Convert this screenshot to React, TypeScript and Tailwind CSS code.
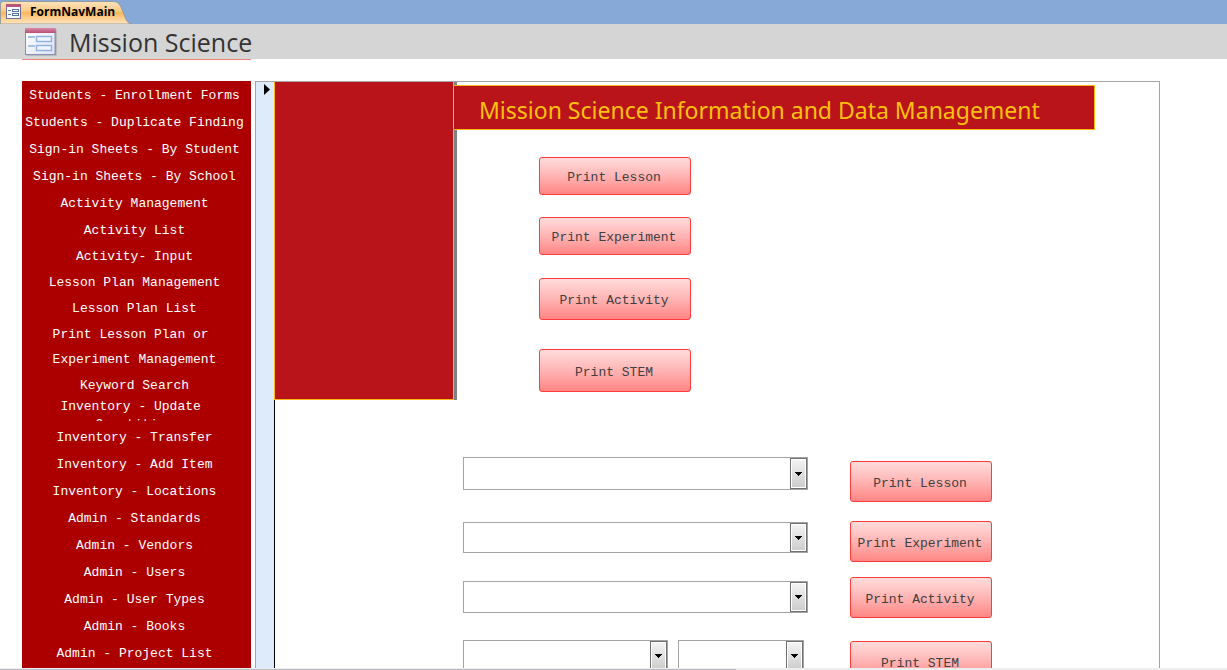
type Item = { label: string; box: string };

const row = "h-[27px] leading-[27px]";

const navItems: Item[] = [
  { label: "Students - Enrollment Forms", box: row },
  { label: "Students - Duplicate Finding", box: row },
  { label: "Sign-in Sheets - By Student", box: row },
  { label: "Sign-in Sheets - By School", box: row },
  { label: "Activity Management", box: row },
  { label: "Activity List", box: row },
  { label: "Activity- Input", box: "h-[26px] leading-[26px]" },
  { label: "Lesson Plan Management", box: "h-[25px] leading-[25px]" },
  { label: "Lesson Plan List", box: row },
  { label: "Print Lesson Plan or \nExperiment Management", box: "h-[51px] leading-[25px]" },
  { label: "Keyword Search", box: "h-[25px] leading-[25px]" },
  { label: "Inventory - Update \nQuantities", box: "mb-[3px] h-[23px] leading-[18px]" },
  { label: "Inventory - Transfer", box: row },
  { label: "Inventory - Add Item", box: row },
  { label: "Inventory - Locations", box: row },
  { label: "Admin - Standards", box: row },
  { label: "Admin - Vendors", box: row },
  { label: "Admin - Users", box: row },
  { label: "Admin - User Types", box: row },
  { label: "Admin - Books", box: row },
  { label: "Admin - Project List", box: row },
];

function FormIcon({ className }: { className: string }) {
  return (
    <svg className={className} viewBox="0 0 32 28" aria-hidden="true">
      <defs>
        <linearGradient id="form-head" x1="0" x2="0" y1="0" y2="1">
          <stop offset="0" stopColor="#d98aa8" />
          <stop offset="1" stopColor="#b84c77" />
        </linearGradient>
        <linearGradient id="form-body" x1="0" x2="1" y1="0" y2="1">
          <stop offset="0" stopColor="#ffffff" />
          <stop offset="1" stopColor="#dde3f3" />
        </linearGradient>
      </defs>
      <rect x="1.5" y="1.5" width="30" height="26" fill="#000" opacity=".25" />
      <rect x=".5" y=".5" width="29.5" height="26" fill="url(#form-body)" stroke="#8a8fb5" />
      <rect x="0" y="0" width="30.5" height="5" fill="url(#form-head)" />
      <path d="M3 9h7M3 18h7" stroke="#a9c0e4" strokeWidth="2" />
      <rect x="11.5" y="8.5" width="15" height="5" fill="#eef4fd" stroke="#93b1de" strokeWidth="1.4" />
      <rect x="11.5" y="17.5" width="15" height="5" fill="#eef4fd" stroke="#93b1de" strokeWidth="1.4" />
    </svg>
  );
}

function SmallFormIcon({ className }: { className: string }) {
  return (
    <svg className={className} viewBox="0 0 16 16" aria-hidden="true">
      <rect x=".5" y=".5" width="14" height="14" fill="#f6f8fd" stroke="#6b6f96" />
      <rect x="0" y="0" width="15" height="3" fill="#b9557c" />
      <path d="M2 6.500h3M2 10.500h3" stroke="#5f7fae" />
      <rect x="6.5" y="5.5" width="6" height="2" fill="#fff" stroke="#55709f" />
      <rect x="6.500" y="9.500" width="6" height="2" fill="#fff" stroke="#55709f" />
    </svg>
  );
}

function PrintButton({ label, className }: { label: string; className: string }) {
  return (
    <button
      type="button"
      className={`shrink-0 whitespace-nowrap rounded-[3px] border border-[#ff3b3b] bg-linear-to-b from-[#ffdcdc] via-[#ffb4b4] to-[#ff8585] pt-1 pr-[2px] text-[#404040] ${className}`}
    >
      {label}
    </button>
  );
}

function Combo({ label, className }: { label: string; className: string }) {
  return (
    <div className={`relative flex shrink-0 border border-[#a5a5a5] bg-white ${className}`}>
      <select aria-label={label} className="min-w-0 flex-1 appearance-none bg-transparent outline-none" />
      <span className="pointer-events-none flex w-[17px] shrink-0 border border-[#707070] bg-white p-px">
        <span className="flex flex-1 items-center justify-center bg-linear-to-b from-[#f3f3f3] via-[#e0e0e0] to-[#cdcdcd]">
          <svg className="h-1 w-[7px]" viewBox="0 0 7 4" shapeRendering="crispEdges" aria-hidden="true">
            <path d="M0 0h7v1H6v1H5v1H4v1H3V3H2V2H1V1H0z" fill="#000" />
          </svg>
        </span>
      </span>
    </div>
  );
}

export default function App() {
  return (
    <div className="flex h-screen flex-col overflow-hidden bg-white font-['Liberation_Mono',monospace] text-[13px]">
      <div className="flex h-6 shrink-0 bg-[#87a9d7]">
        <button type="button" className="relative flex w-[132px] items-center gap-2 pl-[6px]">
          <svg className="absolute inset-0 h-full w-full" viewBox="0 0 132 24" preserveAspectRatio="none" aria-hidden="true">
            <defs>
              <linearGradient id="tab" x1="0" x2="0" y1="0" y2="1">
                <stop offset="0" stopColor="#fde3bd" />
                <stop offset=".4" stopColor="#fbcb88" />
                <stop offset=".5" stopColor="#fab85c" />
                <stop offset="1" stopColor="#fde5c2" />
              </linearGradient>
            </defs>
            <path d="M.5 24V4q0-2.500 3-2.500H113c5 0 7 3 9 8l4 10q1.500 4 6 4.500z" fill="url(#tab)" stroke="#9a9a9a" />
          </svg>
          <SmallFormIcon className="relative h-4 w-4" />
          <span className="relative font-['Open_Sans',sans-serif] text-[12px] font-bold text-black">FormNavMain</span>
        </button>
      </div>
      <header className="flex h-[35px] shrink-0 items-center gap-3 bg-[#d5d5d5] pl-[25px]">
        <FormIcon className="h-7 w-8" />
        <h1 className="pt-[2px] font-['Open_Sans',sans-serif] text-[25px] leading-[33px] text-[#333]">Mission Science</h1>
      </header>

      <div className="flex min-h-0 flex-1 overflow-hidden pl-[22px]">
        <nav className="flex w-[229px] shrink-0 flex-col">
          <div className="mb-[21px] h-px shrink-0 bg-[#f08080]" />
          <div className="flex flex-1 flex-col bg-[#ac0000] pt-px pr-1">
            {navItems.map((item) => (
              <a
                key={item.label}
                href="#"
                className={`block shrink-0 overflow-hidden whitespace-pre text-center text-white ${item.box}`}
              >
                {item.label}
              </a>
            ))}
          </div>
        </nav>

        <main className="mt-[22px] mr-[67px] ml-1 flex min-w-0 flex-1 border-t border-r border-l border-[#a5a5a5]">
          <div className="flex w-[18px] shrink-0 justify-center bg-[#deebfb] pt-[2px] pl-1">
            <svg className="h-[11px] w-[6px]" viewBox="0 0 6 11" aria-hidden="true">
              <path d="M0 0l6 5.500L0 11z" fill="#000" />
            </svg>
          </div>
          <div className="min-w-0 flex-1 border-l border-black">
            <div className="flex">
              <div className="-ml-px h-[318px] w-[180px] shrink-0 border-r border-b border-l border-[#fdb813] bg-[#b91419]" />
              <div className="w-[3px] shrink-0 bg-[#808080]" />
              <div className="min-w-0 flex-1 pt-[3px]">
                <h2 className="relative -ml-1 mr-16 flex h-[45px] items-center whitespace-nowrap border border-[#fdb813] bg-[#b91419] pt-[6px] pl-[25px] font-['Noto_Sans',sans-serif] text-[23px] text-[#fdc010]">
                  Mission Science Information and Data Management
                </h2>
                <div className="mt-[27px] ml-[82px] flex w-[152px] flex-col">
                  <PrintButton label="Print Lesson" className="mb-[22px] h-[38px]" />
                  <PrintButton label="Print Experiment" className="mb-[23px] h-[38px]" />
                  <PrintButton label="Print Activity" className="mb-[29px] h-[42px]" />
                  <PrintButton label="Print STEM" className="h-[43px]" />
                </div>
              </div>
            </div>
            <div className="flex gap-[42px] pl-[188px]">
              <div className="flex w-[345px] flex-col pt-[57px]">
                <Combo label="Lesson" className="mb-8 h-[33px]" />
                <Combo label="Experiment" className="mb-7 h-[31px]" />
                <Combo label="Activity" className="mb-[27px] h-8" />
                <div className="flex gap-[10px]">
                  <Combo label="STEM category" className="h-8 w-[205px]" />
                  <Combo label="STEM item" className="h-8 w-[126px]" />
                </div>
              </div>
              <div className="flex w-[142px] flex-col pt-[61px]">
                <PrintButton label="Print Lesson" className="mb-[19px] h-[41px]" />
                <PrintButton label="Print Experiment" className="mb-[15px] h-[41px]" />
                <PrintButton label="Print Activity" className="mb-[23px] h-[41px]" />
                <PrintButton label="Print STEM" className="h-[41px]" />
              </div>
            </div>
          </div>
        </main>
      </div>
      <footer className="h-[2px] shrink-0 bg-[#eeeeee]">
        <div className="h-full w-3/5 border-b border-[#b8b8c0]" />
      </footer>
    </div>
  );
}
